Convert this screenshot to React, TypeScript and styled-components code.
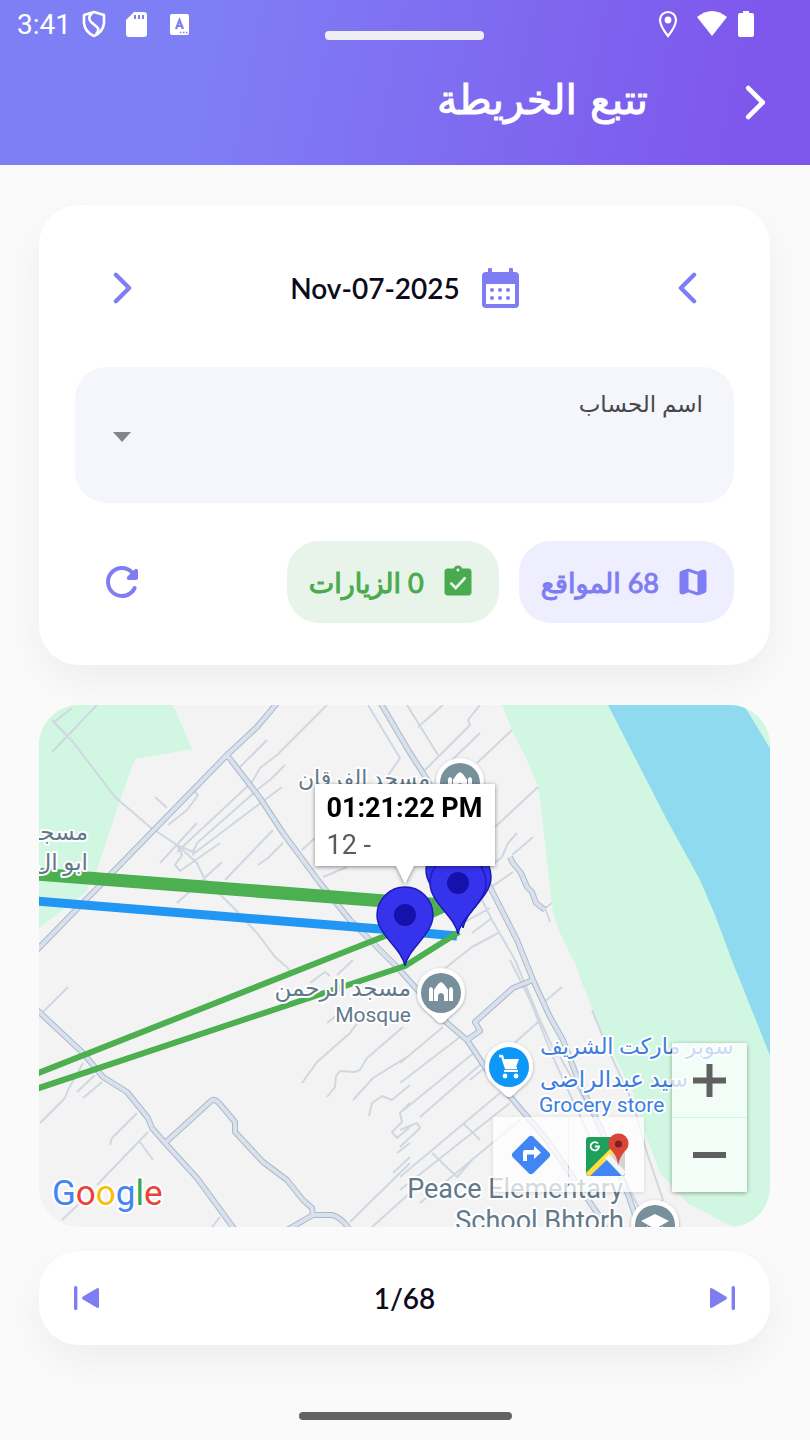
import React, { useState } from "react";
import styled, { createGlobalStyle } from "styled-components";

const GlobalStyle = createGlobalStyle`
  * {
    box-sizing: border-box;
  }

  body {
    margin: 0;
    background: #fafafa;
    font-family: Lato, "DejaVu Sans", sans-serif;
  }

  button {
    padding: 0;
    border: 0;
    background: none;
    color: inherit;
    font: inherit;
    cursor: pointer;
  }

  svg {
    display: block;
  }
`;

const Page = styled.div`
  display: flex;
  flex-direction: column;
  min-height: 100vh;
`;

const Header = styled.header`
  padding-bottom: 9px;
  background: linear-gradient(101deg, #7f7ff5 24%, #7e57ec 92%);
  color: #fff;
`;

const StatusBar = styled.div`
  display: grid;
  grid-template-columns: 1fr auto 1fr;
  align-items: center;
  height: 48px;
  padding: 0 56px 0 17px;
  font-family: Roboto, sans-serif;
  font-size: 28px;
`;

const StatusGroup = styled.div<{ $end?: boolean }>`
  display: flex;
  align-items: center;
  justify-content: ${({ $end }) => ($end ? "flex-end" : "flex-start")};
  gap: ${({ $end }) => ($end ? 11 : 19)}px;

  > span {
    margin-right: -8px;
  }

  > svg:first-child {
    margin-right: 8px;
  }
`;

const Handle = styled.div`
  width: 159px;
  height: 9px;
  margin: 23px 0 0 38px;
  border-radius: 4px;
  background: #efeff3;
`;

const TitleRow = styled.div`
  display: flex;
  align-items: center;
  height: 108px;
  padding: 0 8px;

  h1 {
    margin: 0 60px 4px 0;
    font-family: "DejaVu Sans", sans-serif;
    font-size: 41px;
    line-height: 48px;
    font-weight: 400;
    -webkit-text-stroke: 1px #fff;
  }
`;

const IconButton = styled.button`
  display: flex;
  align-items: center;
  justify-content: center;
  width: 94px;
  height: 94px;
`;

const Main = styled.main`
  display: flex;
  flex-direction: column;
  padding: 40px 40px 40px 39px;
`;

const Card = styled.section`
  border-radius: 40px;
  background: #fff;
  box-shadow: 0 16px 40px rgba(0, 0, 0, 0.05);
  color: #7f7df3;
`;

const FilterCard = styled(Card)`
  display: flex;
  flex-direction: column;
  gap: 32px;
  padding: 36px;
`;

const Row = styled.div`
  display: flex;
  align-items: center;
  justify-content: space-between;
`;

const DateButton = styled.button`
  display: flex;
  align-items: center;
  gap: 22px;

  span {
    color: #0b0b1c;
    font-size: 28px;
    line-height: 36px;
    font-weight: 600;
  }
`;

const Field = styled.div`
  display: grid;
  height: 136px;
  border-radius: 32px;
  background: #f5f6fb;

  > * {
    grid-area: 1 / 1;
  }

  label {
    justify-self: start;
    align-self: start;
    padding: 22px 31px;
    color: #47484d;
    font-size: 23px;
    line-height: 28px;
  }

  select {
    width: 100%;
    height: 100%;
    padding: 40px 31px 0;
    border: 0;
    border-radius: 32px;
    background: transparent;
    font: inherit;
    appearance: none;
  }

  svg {
    align-self: center;
    justify-self: end;
    margin: 4px 38px 0;
    pointer-events: none;
  }
`;

const Chips = styled.div`
  display: flex;
  gap: 20px;
`;

const Chip = styled.button<{ $color: string; $bg: string }>`
  display: flex;
  align-items: center;
  gap: 16px;
  height: 82px;
  padding: 0 23px 0 22px;
  border-radius: 32px;
  background: ${({ $bg }) => $bg};
  color: ${({ $color }) => $color};
  font-size: 27px;
  -webkit-text-stroke: 1px ${({ $color }) => $color};
`;

const MapBox = styled.section`
  position: relative;
  height: 522px;
  margin: 40px 0 24px;
  border-radius: 40px;
  overflow: hidden;
  background: #f4f3f4;

  > svg {
    width: 100%;
    height: 100%;
  }
`;

const InfoWindow = styled.div`
  position: absolute;
  top: 79px;
  left: 50%;
  width: 180px;
  height: 82px;
  padding: 6px 12px;
  transform: translateX(-50%);
  background: #fff;
  filter: drop-shadow(0 1px 2px rgba(0, 0, 0, 0.45));
  color: #5b5b5b;
  font-family: Roboto, sans-serif;
  font-size: 27px;
  line-height: 37px;
  white-space: nowrap;

  strong {
    display: block;
    color: #000;
  }

  &::after {
    content: "";
    position: absolute;
    top: 100%;
    left: 50%;
    transform: translateX(-50%);
    border: 9px solid transparent;
    border-top: 18px solid #fff;
    border-bottom: 0;
  }
`;

const MapControls = styled.div`
  position: absolute;
  right: 23px;
  bottom: 35px;
  display: flex;
  align-items: flex-end;
  gap: 28px;
`;

const ControlGroup = styled.div<{ $column?: boolean }>`
  display: flex;
  flex-direction: ${({ $column }) => ($column ? "column" : "row")};
  gap: 1px;
  border-radius: 2px;
  box-shadow: 0 1px 4px rgba(0, 0, 0, ${({ $column }) => ($column ? 0.35 : 0.12)});

  button {
    display: flex;
    align-items: center;
    justify-content: center;
    width: 75px;
    height: ${({ $column }) => ($column ? 74 : 75)}px;
    background: rgba(255, 255, 255, 0.72);
    color: #606060;
  }
`;

const Pager = styled(Card)`
  display: flex;
  align-items: center;
  justify-content: space-between;

  > span {
    color: #0b0b1c;
    font-size: 28px;
    font-weight: 600;
  }
`;

const GestureBar = styled.div`
  width: 213px;
  height: 8px;
  margin: auto auto 20px;
  border-radius: 4px;
  background: #636363;
`;

const mainRoads = [
  "M36 951L227 755L257 727L278 702",
  "M227 755L260 798L283 833L320 883L350 920L397 967L447 1023L467 1040L487 1070L513 1100L547 1140L600 1217L606 1230",
  "M380 702L410 753L423 773L490 887L517 940L533 980L550 1017L563 1040L577 1077L600 1127L613 1157L630 1200L640 1230",
  "M533 980L513 988L475 1022L480 1031L467 1040",
  "M36 1009L83 1053L103 1077L127 1092L148 1118L152 1128L165 1143L197 1178L235 1230",
  "M165 1143L211 1101Q214 1098 219 1103L235 1122L235 1132L263 1162L287 1180L303 1200L312 1208L313 1215",
  "M287 1230L313 1215L332 1215Q341 1217 350 1230",
  "M510 857L513 863L521 873L527 887L532 892L536 903L545 910",
];

const streets = [
  "M52 720L73 742L115 797L150 827L177 845L197 863L205 880L233 907L257 933L275 957L288 968L290 973",
  "M97 705L52 752M72 708L53 723",
  "M327 705L277 755L260 768L252 782L177 852M267 740L240 767",
  "M285 765L270 780L263 785L197 843L193 852L177 845",
  "M282 787L242 817L192 855M273 830L225 880M283 843L268 858L258 865",
  "M155 797L167 808M193 790L198 795L187 810L168 825M197 823L160 863",
  "M177 845L182 855L175 865L180 871L220 843M222 862L177 903",
  "M368 705L380 725L400 758L385 780M315 838L302 850M347 867L323 877",
  "M407 705L438 755M443 705L418 727M480 705L468 720L470 725L425 770",
  "M480 733L450 762M512 730L477 763M538 787L495 827M533 837L512 855",
  "M517 833L508 843L502 857L488 868M513 872L490 888M552 903L545 908L550 922",
  "M482 900L492 920L515 960L540 1020L557 1057M490 908L463 923M492 918L472 933M498 933L472 947L443 970",
  "M562 987L543 1003M538 1022L510 1047L470 1080M443 1027L400 1063M460 1037L400 1083M475 1052L400 1113",
  "M482 1063L420 1117M500 1093L400 1177M510 1103L400 1190M520 1120L420 1203",
  "M400 1130L417 1123L420 1128L400 1147M463 1123L480 1140M432 1153L457 1177L472 1160",
  "M592 1010L607 1047L633 1103L647 1153L663 1200L647 1217M560 1057L590 1110L640 1210",
  "M510 960L530 1000L552 1055L600 1160",
  "M68 987L43 1012M40 1123L65 1098L68 1090L83 1063M77 1092L95 1075M83 1098L102 1082",
  "M137 1113L112 1138L110 1145M148 1132L97 1185M62 1220L83 1200M140 1142L153 1160M212 1227L220 1217",
  "M310 983L325 972L330 976M353 960L337 975M343 1010L327 1023M367 1010L350 1033L317 1062L302 1083",
  "M403 1027L367 1058L360 1070L355 1072L340 1071L336 1076L335 1087L327 1097",
  "M410 1055L373 1078L353 1100M410 1085L392 1100L382 1096L372 1103L369 1116",
  "M410 1103L400 1113L402 1122L392 1132L397 1138L410 1127M410 1143L397 1153M410 1157L393 1173",
  "M350 1222L410 1163M372 1227L410 1193",
];

const MapLabel = styled.text<{ $color: string; $size: number }>`
  fill: ${({ $color }) => $color};
  font-family: Roboto, "DejaVu Sans", sans-serif;
  font-size: ${({ $size }) => $size}px;
  stroke: #fff;
  stroke-width: 4px;
  stroke-linejoin: round;
  paint-order: stroke;
`;

const GREY = "#62798a";
const BLUE = "#3b7de0";

const labels = [
  { text: "مسجد الفرقان", x: 430, y: 786, size: 22, color: GREY, end: true },
  { text: "مسجد", x: 88, y: 840, size: 23, color: GREY, end: true },
  { text: "ابو ال", x: 88, y: 870, size: 23, color: GREY, end: true },
  { text: "مسجد الرحمن", x: 411, y: 996, size: 23, color: GREY, end: true },
  { text: "Mosque", x: 411, y: 1022, size: 21, color: GREY, end: true },
  { text: "سوبر ماركت الشريف", x: 540, y: 1054, size: 22, color: BLUE },
  { text: "سيد عبدالراضى", x: 540, y: 1087, size: 23, color: BLUE },
  { text: "Grocery store", x: 539, y: 1112, size: 21, color: BLUE },
  { text: "Peace Elementary", x: 623, y: 1198, size: 27, color: GREY, end: true },
  { text: "School Bhtorh", x: 624, y: 1230, size: 27, color: GREY, end: true },
];

const Pin = ({ x, y }: { x: number; y: number }) => (
  <g transform={`translate(${x} ${y})`}>
    <path
      d="M0 0C-3 -18 -28 -31 -28 -51A28 28 0 1 1 28 -51C28 -31 3 -18 0 0Z"
      fill="#3533ec"
      stroke="#1d1bb8"
      strokeWidth="1.5"
    />
    <circle cy="-51" r="11" fill="#1512ab" />
  </g>
);

const Poi = ({ x, y, color, children }: any) => (
  <g transform={`translate(${x} ${y})`}>
    <path
      d="M0 30C-3 30 -6 26 -9 23L-17 16A24 24 0 1 1 17 16L9 23C6 26 3 30 0 30Z"
      fill="#fff"
      filter="url(#poiShadow)"
    />
    <circle r="20" fill={color} />
    {children}
  </g>
);

const MosqueGlyph = () => (
  <path
    d="M-12 8V-4Q-10 -8 -8 -4V8ZM8 8V-4Q10 -8 12 -4V8ZM-7 8V-3Q-6 -5 -5 -6Q-4 -9 0 -11Q4 -9 5 -6Q6 -5 7 -3V8H3V2Q0 -2 -3 2V8Z"
    fill="#fff"
  />
);

const MapCanvas = () => (
  <svg viewBox="39 705 731 522" preserveAspectRatio="xMidYMid slice">
    <defs>
      <filter id="poiShadow" x="-30%" y="-30%" width="160%" height="160%">
        <feDropShadow dx="0" dy="1" stdDeviation="1.5" floodOpacity="0.35" />
      </filter>
    </defs>
    <rect x="39" y="705" width="732" height="522" fill="#f4f3f4" />
    <path
      d="M39 705H173L192 749L135 759L120 800L97 870L85 893L39 928Z"
      fill="#d1f6e1"
    />
    <path
      d="M502 705L508 720L513 733L527 760L537 783L540 800L545 843L550 887L553 913L560 933L577 968L582 983L600 1027L616 1060L633 1093L643 1127L660 1173L673 1187L687 1203L733 1227H771V705Z"
      fill="#d1f6e1"
    />
    <path
      d="M608 705L667 820L700 880L715 915L733 963L771 1058V750L748 712L743 705Z"
      fill="#8fdaee"
    />
    <path
      d={streets.join("")}
      fill="none"
      stroke="#cfd7e1"
      strokeWidth="2"
      strokeLinejoin="round"
    />
    {[
      { color: "#abb9cb", width: 6 },
      { color: "#d9e1ec", width: 4 },
    ].map(({ color, width }) => (
      <path
        key={color}
        d={mainRoads.join("")}
        fill="none"
        stroke={color}
        strokeWidth={width}
        strokeLinejoin="round"
      />
    ))}

    {/* 이동 경로 */}
    <g fill="none" strokeLinejoin="round">
      <path d="M36 874L385 901L446 905" stroke="#4caf50" strokeWidth="13" />
      <path d="M36 901L380 929L457 936" stroke="#2196f3" strokeWidth="9" />
      <path d="M36 1074L385 936L452 906" stroke="#4caf50" strokeWidth="6" />
      <path d="M36 1089L405 966L459 932" stroke="#4caf50" strokeWidth="6" />
    </g>

    {labels.map(({ text, x, y, size, color, end }) => (
      <MapLabel
        key={text}
        x={x}
        y={y}
        textAnchor={end ? "end" : "start"}
        $size={size}
        $color={color}
      >
        {text}
      </MapLabel>
    ))}

    <Poi x={460} y={783} color="#78909c">
      <MosqueGlyph />
    </Poi>
    <Poi x={441} y={993} color="#78909c">
      <MosqueGlyph />
    </Poi>
    <Poi x={509} y={1067} color="#0f97f8">
      <path
        d="M-10 -11H-7L-3 1H8"
        fill="none"
        stroke="#fff"
        strokeWidth="2.4"
        strokeLinejoin="round"
      />
      <path d="M-7 -8H10L7 0H-4ZM-5 3H9V5H-5Z" fill="#fff" />
      <circle cx="-4" cy="9" r="2.4" fill="#fff" />
      <circle cx="7" cy="9" r="2.4" fill="#fff" />
    </Poi>
    <Poi x={655} y={1225} color="#78909c">
      <path d="M-14 -4L0 -11L14 -4L0 4ZM-8 1V7L0 11L8 7V1L0 6Z" fill="#fff" />
    </Poi>

    <Pin x={463} y={928} />
    <Pin x={454} y={921} />
    <Pin x={458} y={934} />
    <Pin x={405} y={966} />

    <MapLabel x="52" y="1205" $size={35} $color="#4285f4">
      <tspan fill="#4285f4">G</tspan>
      <tspan fill="#ea4335">o</tspan>
      <tspan fill="#fbbc05">o</tspan>
      <tspan fill="#4285f4">g</tspan>
      <tspan fill="#34a853">l</tspan>
      <tspan fill="#ea4335">e</tspan>
    </MapLabel>
  </svg>
);

const Chevron = ({ width, height, left }: any) => (
  <svg
    width={width}
    height={height}
    viewBox="0 0 20 34"
    fill="none"
    stroke="currentColor"
    strokeWidth="4.6"
    strokeLinecap="round"
    strokeLinejoin="round"
  >
    <path d={left ? "M17 3L3 17L17 31" : "M3 3L17 17L3 31"} />
  </svg>
);

const SkipIcon = ({ end }: { end?: boolean }) => (
  <svg width="25" height="24" viewBox="0 0 25 24" fill="currentColor">
    <g transform={end ? "translate(25 0) scale(-1 1)" : undefined}>
      <rect width="3.4" height="24" rx="1.5" />
      <path d="M23 2.2Q25 1.500 25 3.500V20.500Q25 22.500 23 21.800L9 13.400Q7 12 9 10.600Z" />
    </g>
  </svg>
);

const App = () => {
  const [account, setAccount] = useState("");
  const [index, setIndex] = useState(1);
  const total = 68;

  return (
    <Page>
      <GlobalStyle />
      <Header>
        <StatusBar>
          <StatusGroup>
            <span>3:41</span>
            <svg width="24" height="28" viewBox="0 0 24 28" fill="none" stroke="#fff" strokeWidth="2.6">
              <path d="M12 2L22 5V13Q21 22 12 26Q3 22 2 13V5Z" strokeLinejoin="round" />
              <path d="M10 3Q5 8 9 12L15 17Q18 20 14 24" />
            </svg>
            <svg width="24" height="28" viewBox="0 0 24 28">
              <path d="M9 2H19Q22 2 22 5V24Q22 27 19 27H4Q1 27 1 24V10Z" fill="#fff" />
              <path d="M10 5V9M14 5V9M18 5V9" stroke="#8080ee" strokeWidth="2" />
            </svg>
            <svg width="24" height="28" viewBox="0 0 24 28">
              <rect x="2" y="4" width="19" height="21" rx="2" fill="#fff" />
              <path d="M8 19L11.500 10L15 19M9.500 16H13.500" fill="none" stroke="#7f7ff4" strokeWidth="2.2" />
              <path d="M12 22.500H20" stroke="#7f7ff4" strokeWidth="1.4" strokeDasharray="1.500 1.500" />
            </svg>
          </StatusGroup>
          <Handle />
          <StatusGroup $end>
            <svg width="20" height="28" viewBox="0 0 20 28">
              <path
                d="M10 26Q2 16 2 10A8 8 0 0 1 18 10Q18 16 10 26Z"
                fill="none"
                stroke="#fff"
                strokeWidth="2.2"
              />
              <circle cx="10" cy="10" r="3.4" fill="#fff" />
            </svg>
            <svg width="30" height="28" viewBox="0 0 30 28" fill="#fff">
              <path d="M0 7Q15 -5 30 7L15 26Z" />
            </svg>
            <svg width="16" height="28" viewBox="0 0 16 28" fill="#fff">
              <path d="M5 1H11V3H14Q16 3 16 5V25Q16 27 14 27H2Q0 27 0 25V5Q0 3 2 3H5Z" />
            </svg>
          </StatusGroup>
        </StatusBar>
        <TitleRow dir="rtl">
          <IconButton aria-label="رجوع">
            <Chevron width={21} height={35} />
          </IconButton>
          <h1>تتبع الخريطة</h1>
        </TitleRow>
      </Header>

      <Main>
        <FilterCard dir="rtl">
          <Row>
            <IconButton aria-label="اليوم السابق">
              <Chevron width={19} height={32} left />
            </IconButton>
            <DateButton>
              <svg width="37" height="40" viewBox="0 0 37 40">
                <path
                  d="M8 1.500V6M29 1.500V6"
                  stroke="currentColor"
                  strokeWidth="4"
                  strokeLinecap="round"
                />
                <rect y="4" width="37" height="36" rx="4" fill="currentColor" />
                <rect x="4" y="16" width="29" height="20" fill="#fff" />
                <g fill="currentColor">
                  {[10, 18, 26].map((x) => (
                    <React.Fragment key={x}>
                      <circle cx={x} cy="22" r="2" />
                      <circle cx={x} cy="30" r="2" />
                    </React.Fragment>
                  ))}
                </g>
              </svg>
              <span>Nov-07-2025</span>
            </DateButton>
            <IconButton aria-label="اليوم التالي">
              <Chevron width={19} height={32} />
            </IconButton>
          </Row>

          <Field>
            <label htmlFor="account">اسم الحساب</label>
            <select
              id="account"
              value={account}
              onChange={(e) => setAccount(e.target.value)}
            >
              <option value=""></option>
            </select>
            <svg width="18" height="10" viewBox="0 0 18 10" fill="#858689">
              <path d="M0 0H18L9 10Z" />
            </svg>
          </Field>

          <Row>
            <Chips>
              <Chip $color="#7f7df3" $bg="#efeefe">
                <svg width="36" height="36" viewBox="0 0 24 24" fill="currentColor">
                  <path d="M14.650 4.980l-5-1.750c-.42-.15-.88-.15-1.300-.01L4.360 4.560C3.550 4.840 3 5.600 3 6.460v11.850c0 1.410 1.410 2.370 2.720 1.860l2.930-1.140c.22-.09.47-.09.69-.01l5 1.750c.42.15.88.15 1.300.01l3.990-1.340c.81-.27 1.360-1.040 1.360-1.900V5.690c0-1.410-1.410-2.370-2.720-1.860l-2.930 1.140c-.22.08-.46.09-.69.01zM15 18.890l-6-2.110V5.110l6 2.110v11.670z" />
                </svg>
                68 المواقع
              </Chip>
              <Chip $color="#49ab4d" $bg="#e8f3ea">
                <svg width="36" height="36" viewBox="0 0 24 24">
                  <path
                    d="M19 3h-4.180C14.400 1.840 13.300 1 12 1s-2.400.84-2.820 2H5c-1.100 0-2 .9-2 2v14c0 1.100.9 2 2 2h14c1.100 0 2-.9 2-2V5c0-1.100-.9-2-2-2zm-7 0c.55 0 1 .45 1 1s-.45 1-1 1-1-.45-1-1 .45-1 1-1z"
                    fill="currentColor"
                  />
                  <path
                    d="M7.500 13L10.500 16L16.500 9.500"
                    fill="none"
                    stroke="#e8f3ea"
                    strokeWidth="1.8"
                    strokeLinecap="round"
                  />
                </svg>
                0 الزيارات
              </Chip>
            </Chips>
            <IconButton aria-label="تحديث">
              <svg width="48" height="48" viewBox="0 0 24 24" fill="currentColor">
                <path d="M17.650 6.350c-1.630-1.630-3.940-2.570-6.480-2.310-3.670.37-6.690 3.350-7.100 7.020C3.520 15.910 7.270 20 12 20c3.190 0 5.930-1.870 7.210-4.560.32-.67-.16-1.440-.9-1.440-.37 0-.72.2-.88.53-1.130 2.430-3.840 3.970-6.800 3.310-2.220-.49-4.010-2.300-4.480-4.520C5.310 9.440 8.260 6 12 6c1.660 0 3.140.69 4.220 1.780l-1.510 1.510c-.63.63-.19 1.710.7 1.710H19c.55 0 1-.45 1-1V6.410c0-.89-1.080-1.340-1.710-.71l-.64.65z" />
              </svg>
            </IconButton>
          </Row>
        </FilterCard>

        <MapBox>
          <MapCanvas />
          <InfoWindow>
            <strong>01:21:22 PM</strong>
            12 -
          </InfoWindow>
          <MapControls>
            <ControlGroup>
              <button aria-label="Directions">
                <svg width="40" height="40" viewBox="0 0 40 40">
                  <path
                    d="M18 1.500Q20 0 22 1.500L38.500 18Q40 20 38.500 22L22 38.500Q20 40 18 38.500L1.500 22Q0 20 1.500 18Z"
                    fill="#4285f4"
                  />
                  <path
                    d="M12 26V17Q12 15 14 15H23V11L30 17.500L23 24V19.500H16V26Z"
                    fill="#fff"
                  />
                </svg>
              </button>
              <button aria-label="Google Maps">
                <svg width="44" height="44" viewBox="0 0 44 44">
                  <rect x="1" y="4" width="39" height="39" rx="3" fill="#1fa05a" />
                  <path d="M40 18V40Q40 43 37 43L20 24L27 14Z" fill="#d3d3d3" />
                  <path d="M3 42L21 25L37 43H4Z" fill="#4285f4" />
                  <path d="M1 40L26 15L29 20L5 43Q1 43 1 40Z" fill="#ffdf3f" />
                  <path d="M20 25L24 21L40 38Q40 42 37 43Z" fill="#f5f5f5" />
                  <path
                    d="M13 10.500A4.200 4.200 0 1 0 14 13.500H10"
                    fill="none"
                    stroke="#fff"
                    strokeWidth="1.8"
                  />
                  <path
                    d="M33 33Q33 25 27 18A10 10 0 1 1 40 18Q34 25 33 33Z"
                    fill="#db4437"
                  />
                  <circle cx="33.500" cy="11" r="3.600" fill="#7b231c" />
                </svg>
              </button>
            </ControlGroup>
            <ControlGroup $column>
              <button aria-label="Zoom in">
                <svg width="33" height="33" viewBox="0 0 33 33" fill="currentColor">
                  <path d="M13.500 0H19.500V13.500H33V19.500H19.500V33H13.500V19.500H0V13.500H13.500Z" />
                </svg>
              </button>
              <button aria-label="Zoom out">
                <svg width="33" height="6" viewBox="0 0 33 6" fill="currentColor">
                  <path d="M0 0H33V6H0Z" />
                </svg>
              </button>
            </ControlGroup>
          </MapControls>
        </MapBox>

        <Pager>
          <IconButton
            aria-label="السابق"
            onClick={() => setIndex(Math.max(1, index - 1))}
          >
            <SkipIcon />
          </IconButton>
          <span>
            {index}/{total}
          </span>
          <IconButton
            aria-label="التالي"
            onClick={() => setIndex(Math.min(total, index + 1))}
          >
            <SkipIcon end />
          </IconButton>
        </Pager>
      </Main>
      <GestureBar />
    </Page>
  );
};

export default App;
